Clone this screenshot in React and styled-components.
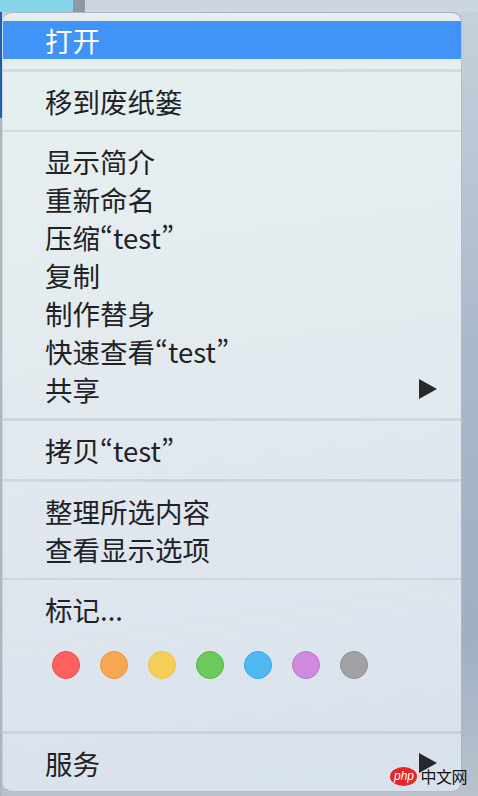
import React from 'react'
import styled, { createGlobalStyle } from 'styled-components'

const GlobalStyle = createGlobalStyle`
  html, body {
    margin: 0;
    padding: 0;
    overflow: hidden;
  }
  body {
    font-family: "Noto Sans CJK SC", "Noto Sans", sans-serif;
  }
`

const tags = [
  { fill: '#fe6060', edge: '#f44545' },
  { fill: '#f7a651', edge: '#f3942c' },
  { fill: '#f5ce59', edge: '#f2c136' },
  { fill: '#6cc95b', edge: '#4cb83a' },
  { fill: '#50b8f3', edge: '#2ca9ee' },
  { fill: '#cf8ade', edge: '#c36ed7' },
  { fill: '#a2a2a4', edge: '#8e8e90' }
]

const Desktop = styled.div`
  position: relative;
  width: 478px;
  height: 796px;
  box-sizing: border-box;
  padding: 12px 16px 4px 2px;
  background:
    linear-gradient(to right, #86d4e8 0 73px, #8e99a3 73px 85px, #ccd6e0 85px) top / 100% 12px no-repeat,
    linear-gradient(to bottom, #1d5fb0 0 92px, #1f5eb5 92px 118px, #aeb6bf 118px) left / 2px 100% no-repeat,
    linear-gradient(to bottom, #c7d1dc, #a9b8ca 45%, #9fb0c5 80%, #b9c2cc);
`

const Menu = styled.div`
  display: flex;
  flex-direction: column;
  height: 780px;
  box-sizing: border-box;
  padding: 8px 0 9px;
  border-radius: 10px;
  border: 1px solid rgba(90, 100, 110, 0.35);
  border-left-color: rgba(90, 100, 110, 0.15);
  background: linear-gradient(172deg, #e6eff0 0%, #e4ecef 35%, #dfe6ee 65%, #d8e2ec 100%);
  overflow: hidden;
  color: #1f2226;
`

const Item = styled.div`
  display: flex;
  align-items: center;
  justify-content: space-between;
  height: 38px;
  padding: 0 24px 0 42px;
  font-size: 27.5px;
  line-height: 38px;
  font-feature-settings: "pwid";
  white-space: nowrap;
  background: ${p => (p.$active ? '#4193f7' : 'transparent')};
  color: ${p => (p.$active ? '#ffffff' : 'inherit')};
`

const Separator = styled.div`
  height: 3px;
  margin: 10px 0;
  background: rgba(110, 130, 150, 0.17);
`

const Arrow = styled.svg`
  width: 18px;
  height: 20px;
  fill: #26282c;
`

const TagRow = styled.div`
  display: flex;
  gap: 20px;
  padding: 23px 0 42px 49px;
`

const Tag = styled.span`
  width: 28px;
  height: 28px;
  box-sizing: border-box;
  border-radius: 50%;
  background: ${p => p.$fill};
  border: 1.5px solid ${p => p.$edge};
`

const Watermark = styled.div`
  position: absolute;
  right: 11px;
  bottom: 8px;
  display: flex;
  align-items: center;
  gap: 3px;
`

const PhpBadge = styled.span`
  display: inline-flex;
  align-items: center;
  justify-content: center;
  width: 27px;
  height: 19px;
  border-radius: 50%;
  background: #e8262a;
  color: #ffffff;
  font-family: "Liberation Sans", sans-serif;
  font-style: italic;
  font-size: 12px;
  line-height: 1;
`

const SiteName = styled.span`
  font-size: 16px;
  color: #111111;
  letter-spacing: -0.5px;
`

const SubArrow = () => (
  <Arrow viewBox="0 0 18 20">
    <polygon points="0,0 18,10 0,20" />
  </Arrow>
)

const App = () => {
  return (
    <>
      <GlobalStyle />
      <Desktop>
        <Menu>
          <Item $active>打开</Item>
          <Separator />
          <Item>移到废纸篓</Item>
          <Separator />
          <Item>显示简介</Item>
          <Item>重新命名</Item>
          <Item>压缩“test”</Item>
          <Item>复制</Item>
          <Item>制作替身</Item>
          <Item>快速查看“test”</Item>
          <Item>
            共享
            <SubArrow />
          </Item>
          <Separator />
          <Item>拷贝“test”</Item>
          <Separator />
          <Item>整理所选内容</Item>
          <Item>查看显示选项</Item>
          <Separator />
          <Item>标记...</Item>
          <TagRow>
            {tags.map((t, i) => (
              <Tag key={i} $fill={t.fill} $edge={t.edge} />
            ))}
          </TagRow>
          <Separator />
          <Item>
            服务
            <SubArrow />
          </Item>
        </Menu>
        <Watermark>
          <PhpBadge>php</PhpBadge>
          <SiteName>中文网</SiteName>
        </Watermark>
      </Desktop>
    </>
  )
}

export default App
